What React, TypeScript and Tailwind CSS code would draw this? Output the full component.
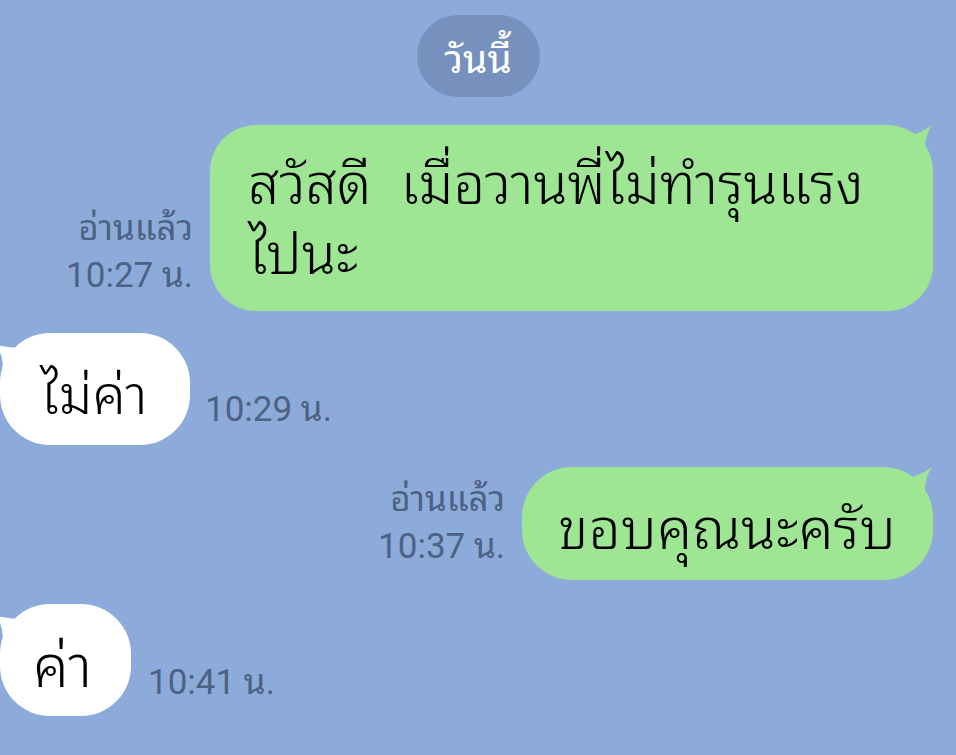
import React from "react";

const FONT = { fontFamily: '"Noto Sans Thai Looped", "Noto Sans Thai", "Noto Sans", Roboto, sans-serif' };
const TIME_FONT = { fontFamily: 'Roboto, "Noto Sans Thai Looped", "Noto Sans Thai", "Noto Sans", sans-serif' };

function TailRight({ color }: { color: string }) {
  return (
    <svg className="absolute right-0 top-0" width="34" height="40" viewBox="0 0 34 40">
      <path d="M0 10 C12 12 22 8 33 0 C26 10 24 24 28 40 L0 40 Z" fill={color} />
    </svg>
  );
}

function TailLeft({ color }: { color: string }) {
  return (
    <svg className="absolute left-[-4px] top-[6px]" width="34" height="40" viewBox="0 0 34 40">
      <path d="M34 8 C22 10 12 8 0 6 C6 14 8 24 6 40 L34 40 Z" fill={color} />
    </svg>
  );
}

function ReadLabel({ time }: { time: string }) {
  return (
    <div className="flex flex-col items-end text-[#4d6283] leading-[47px]" style={TIME_FONT}>
      <span className="text-[35px]">อ่านแล้ว</span>
      <span className="text-[35px]">{time}</span>
    </div>
  );
}

export default function App() {
  return (
    <div className="w-[956px] h-[755px] bg-[#8cabda] overflow-hidden" style={FONT}>
      <div className="flex flex-col">
        <div className="flex justify-center pt-[15px]">
          <div className="h-[82px] w-[123px] rounded-[41px] bg-[#7691bd] flex items-center justify-center text-white text-[39px]">
            วันนี้
          </div>
        </div>

        <div className="mt-[28px] flex justify-end items-end pr-[23px] gap-[17px]">
          <div className="mb-[12px]">
            <ReadLabel time="10:27 น." />
          </div>
          <div className="relative w-[723px] h-[186px] rounded-[46px] bg-[#9fe694] pl-[38px] pt-[19px] text-[56px] leading-[70px] font-light text-black">
            <TailRight color="#9fe694" />
            <div className="relative whitespace-nowrap">
              สวัสดี&nbsp; เมื่อวานพี่ไม่ทำรุนแรง
              <br />
              ไปนะ
            </div>
          </div>
        </div>

        <div className="mt-[22px] flex items-end gap-[15px]">
          <div className="relative h-[112px] w-[190px] rounded-[50px] bg-white flex items-center pl-[40px] text-[54px] font-light text-black">
            <TailLeft color="#ffffff" />
            <span className="relative">ไม่ค่า</span>
          </div>
          <div className="mb-[15px] text-[35px] leading-[40px] text-[#4d6283]" style={TIME_FONT}>
            10:29 น.
          </div>
        </div>

        <div className="mt-[22px] flex justify-end items-end pr-[23px] gap-[17px]">
          <div className="mb-[10px]">
            <ReadLabel time="10:37 น." />
          </div>
          <div className="relative h-[113px] w-[411px] rounded-[50px] bg-[#9fe694] flex items-center pl-[36px] text-[57px] font-light text-black">
            <TailRight color="#9fe694" />
            <span className="relative whitespace-nowrap">ขอบคุณนะครับ</span>
          </div>
        </div>

        <div className="mt-[24px] flex items-end gap-[17px]">
          <div className="relative h-[112px] w-[131px] rounded-[50px] bg-white flex items-center pl-[33px] text-[58px] font-light text-black">
            <TailLeft color="#ffffff" />
            <span className="relative">ค่า</span>
          </div>
          <div className="mb-[13px] text-[35px] leading-[40px] text-[#4d6283]" style={TIME_FONT}>
            10:41 น.
          </div>
        </div>
      </div>
    </div>
  );
}
